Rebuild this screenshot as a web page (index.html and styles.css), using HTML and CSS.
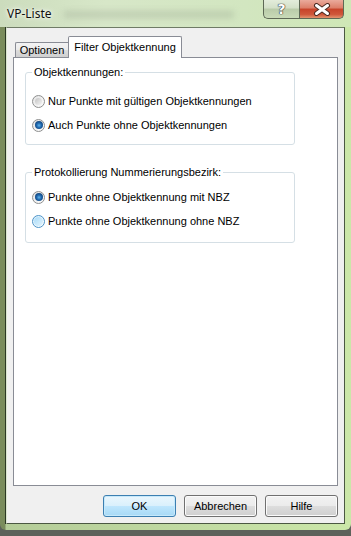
FILE: index.html
```html
<!DOCTYPE html>
<html lang="de">
<head>
    <meta charset="UTF-8">
    <meta name="viewport" content="width=device-width, initial-scale=1.0">
    <title>VP-Liste</title>
    <link rel="stylesheet" href="styles.css">
</head>
<body>
    <div class="window">
        <div class="titlebar">
            <span class="title">VP-Liste</span>
            <span class="glass-blur"></span>
            <div class="caption-buttons">
                <span class="cap-btn help">?</span>
                <span class="cap-btn close">
                    <svg width="18" height="13" viewBox="0 0 18 13">
                        <path d="M3.5 2.5 L14.5 10.5 M14.5 2.5 L3.5 10.5" stroke="#4a2a22" stroke-width="5" stroke-linecap="round"/>
                        <path d="M3.5 2.5 L14.5 10.5 M14.5 2.5 L3.5 10.5" stroke="#fff" stroke-width="3" stroke-linecap="round"/>
                    </svg>
                </span>
            </div>
        </div>
        <div class="client">
            <div class="tabs">
                <span class="tab">Optionen</span>
                <span class="tab active">Filter Objektkennung</span>
            </div>
            <div class="tab-panel">
                <fieldset class="group">
                    <legend>Objektkennungen:</legend>
                    <label class="option"><span class="radio"></span>Nur Punkte mit gültigen Objektkennungen</label>
                    <label class="option"><span class="radio checked"></span>Auch Punkte ohne Objektkennungen</label>
                </fieldset>
                <fieldset class="group group-nbz">
                    <legend>Protokollierung Nummerierungsbezirk:</legend>
                    <label class="option"><span class="radio checked"></span>Punkte ohne Objektkennung mit NBZ</label>
                    <label class="option"><span class="radio hot"></span>Punkte ohne Objektkennung ohne NBZ</label>
                </fieldset>
            </div>
            <div class="buttons">
                <button class="btn btn-default">OK</button>
                <button class="btn">Abbrechen</button>
                <button class="btn">Hilfe</button>
            </div>
        </div>
    </div>
</body>
</html>
```

FILE: styles.css
```css
body {
    margin: 0;
    width: 351px;
    height: 536px;
    overflow: hidden;
    background: #5d625b;
    font-family: "Liberation Sans", Arial, sans-serif;
    font-size: 11px;
    color: #000;
}
.window {
    width: 351px;
    height: 530px;
    box-sizing: border-box;
    padding: 0 6px 6px 6px;
    display: flex;
    flex-direction: column;
    background: linear-gradient(to right, #7a8c5c 0, #7a8c5c 5px, #b4cc98 6px, #c2dca3 60%, #cbe7a8 100%);
    border-radius: 0 0 6px 6px;
}
.titlebar {
    height: 27px;
    margin: 0 -6px;
    padding: 0 7px;
    display: flex;
    align-items: flex-start;
    background: linear-gradient(to right, #ccdcbd 0, #d7e7c8 30%, #d2e6c0 70%, #cfe7b6 100%);
}
.title {
    font-family: "Noto Sans", "Liberation Sans", sans-serif;
    font-size: 12px;
    line-height: 27px;
    color: #111;
    text-shadow: 0 0 6px #fff, 0 0 3px #fff;
}
.glass-blur {
    width: 170px;
    height: 7px;
    margin: 11px 0 0 12px;
    background: rgba(150, 160, 140, 0.35);
    filter: blur(3px);
}
.caption-buttons {
    margin-left: auto;
    display: flex;
}
.cap-btn {
    height: 19px;
    box-sizing: border-box;
    border: 1px solid #5e6956;
    border-top: none;
    display: flex;
    align-items: center;
    justify-content: center;
}
.help {
    width: 36px;
    border-right: none;
    border-radius: 0 0 0 5px;
    background: linear-gradient(#e3ecdb 0, #d3e0c8 45%, #b9cba9 50%, #c9dbb8 100%);
    color: #fff;
    font-family: "DejaVu Sans", sans-serif;
    font-weight: bold;
    font-size: 14px;
    line-height: 18px;
    text-shadow: 0 0 1px #333, 0 0 1px #333, 0 0 1px #333;
}
.close {
    width: 45px;
    border-radius: 0 0 5px 0;
    background: linear-gradient(#eaaa9c 0, #dc7e68 45%, #c7432a 50%, #cf573a 80%, #e39570 100%);
}
.client {
    flex: 1;
    display: flex;
    flex-direction: column;
    background: #f0f0f0;
    border: 1px solid #4b5842;
    border-left-color: #dbe6cf;
    border-top-color: #6f7b66;
    box-shadow: -1px 0 0 #2c3824;
    padding: 8px 6px 6px 6px;
}
.tabs {
    display: flex;
    align-items: flex-end;
    height: 21px;
    padding-left: 2px;
}
.tab {
    box-sizing: border-box;
    width: 53px;
    height: 15px;
    border: 1px solid #898c95;
    border-bottom: none;
    border-right: none;
    border-radius: 2px 0 0 0;
    background: linear-gradient(#f3f3f3 0, #ebebeb 50%, #dddddd 51%, #cfcfcf 100%);
    text-align: center;
    line-height: 14px;
}
.tab.active {
    width: 114px;
    height: 22px;
    margin-bottom: -1px;
    border-right: 1px solid #898c95;
    border-radius: 2px 2px 0 0;
    background: #fff;
    line-height: 20px;
    position: relative;
    z-index: 1;
}
.tab-panel {
    flex: 1;
    background: #fff;
    border: 1px solid #898c95;
}
.group {
    margin: 8px 0 0 11px;
    width: 270px;
    box-sizing: border-box;
    min-width: 0;
    border: 1px solid #d5dfe5;
    border-radius: 3px;
    padding: 10px 0 7px 6px;
}
.group legend {
    padding: 0 2px;
    line-height: 13px;
}
.group-nbz {
    margin-top: 21px;
    padding-top: 6px;
    padding-bottom: 9px;
}
.option {
    display: flex;
    align-items: center;
    height: 24px;
}
.radio {
    width: 13px;
    height: 13px;
    box-sizing: border-box;
    margin-right: 3px;
    border-radius: 50%;
    border: 1px solid #8e8f8f;
    background: linear-gradient(135deg, #e4e4e4, #fdfdfd);
    display: flex;
    align-items: center;
    justify-content: center;
}
.radio::before {
    content: '';
    width: 7px;
    height: 7px;
    border-radius: 50%;
    background: linear-gradient(135deg, #c4c4c4, #f4f4f4);
}
.radio.checked::before {
    width: 8px;
    height: 8px;
    background: radial-gradient(circle at 50% 55%, #5fb4ea 0, #1f66ad 40%, #0b2f55 100%);
}
.radio.hot {
    border-color: #4c93c8;
    background: linear-gradient(135deg, #d6eefb, #ffffff);
}
.radio.hot::before {
    width: 9px;
    height: 9px;
    background: linear-gradient(135deg, #a9dbf8, #e3f4fd);
}
.buttons {
    display: flex;
    justify-content: flex-end;
    gap: 8px;
    margin-top: 9px;
}
.btn {
    width: 73px;
    height: 22px;
    padding: 0;
    border: 1px solid #707070;
    border-radius: 3px;
    font-family: "Liberation Sans", Arial, sans-serif;
    font-size: 11px;
    color: #000;
    background: linear-gradient(#f2f2f2 0, #ebebeb 50%, #dddddd 51%, #cfcfcf 100%);
    box-shadow: inset 0 0 0 1px #fbfbfb;
}
.btn-default {
    border-color: #3c7fb1;
    background: linear-gradient(#eaf6fd 0, #d9f0fc 50%, #bee6fd 51%, #a7d9f5 100%);
    box-shadow: inset 0 0 0 1px #c6e9fb;
}
```
